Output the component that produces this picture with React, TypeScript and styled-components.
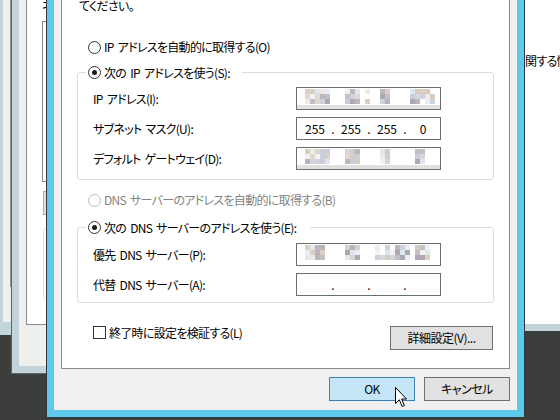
import React from "react";
import styled, { createGlobalStyle } from "styled-components";

const GlobalStyle = createGlobalStyle`
  html, body { margin: 0; padding: 0; }
  body { width: 560px; height: 420px; overflow: hidden; background: #3c3e3b; }
  #root { width: 560px; height: 420px; }
`;

const Desktop = styled.div`
  position: relative;
  width: 560px;
  height: 420px;
  overflow: hidden;
  background: #3c3e3b;
  font-family: "Noto Sans CJK JP", "Noto Sans", sans-serif;
  font-size: 12px;
  line-height: 16px;
  letter-spacing: -0.7px;
  word-spacing: 2px;
  color: #000;
  font-feature-settings: "palt" 1;
`;

/* ---------- background windows ---------- */
const WindowA = styled.div`
  position: absolute;
  left: -197px;
  top: -10px;
  width: 208px;
  height: 345px;
  box-sizing: border-box;
  background: #c4d4db;
  padding-left: 200px;
`;
const WindowAClient = styled.div`
  width: 8px;
  height: 332px;
  background: #eef0ee;
`;
const WindowAPanel = styled.div`
  width: 7px;
  height: 297px;
  border-right: 1px solid #8d9096;
`;

const WindowB = styled.div`
  position: absolute;
  left: 11px;
  top: -10px;
  width: 200px;
  height: 384px;
  box-sizing: border-box;
  border: 1px solid #5d6468;
  border-top: none;
  background: #c3d3da;
  padding: 0 7px 7px;
  display: flex;
  flex-direction: column;
`;
const WindowBClient = styled.div`
  flex: 1;
  background: #eef0ee;
  padding-left: 7px;
`;
const WindowBPanel = styled.div`
  height: 335px;
  box-sizing: border-box;
  background: #fff;
  border-left: 1px solid #898c95;
  border-bottom: 1px solid #898c95;
  padding: 8px 0 0 15px;
  display: flex;
  flex-direction: column;
  align-items: flex-start;
  white-space: nowrap;
`;
const BListBox = styled.div`
  margin-top: 7px;
  width: 150px;
  height: 161px;
  box-sizing: border-box;
  border: 1px solid #828790;
  background: #fff;
`;
const BButton = styled.div`
  margin: 9px 0 0 1px;
  width: 80px;
  height: 24px;
  box-sizing: border-box;
  border: 1px solid #adadad;
  background: #e1e1e1;
`;
const BGroup = styled.div`
  margin: 13px 0 0 1px;
  width: 140px;
  height: 71px;
  box-sizing: border-box;
  border: 1px solid #dcdfe4;
  border-radius: 3px;
`;

const WindowC = styled.div`
  position: absolute;
  left: 300px;
  top: -10px;
  width: 400px;
  height: 341px;
  box-sizing: border-box;
  background: #c3d3da;
  padding-bottom: 7px;
`;
const WindowCClient = styled.div`
  height: 100%;
  box-sizing: border-box;
  background: #fff;
  padding: 63px 0 0 225px;
  white-space: nowrap;
`;

/* ---------- main dialog ---------- */
const Dialog = styled.div`
  position: absolute;
  left: 46px;
  top: -31px;
  width: 479px;
  height: 449px;
  box-sizing: border-box;
  border: 1px solid #33393b;
  background: #5ec9ea;
  padding: 0 7px 7px;
  display: flex;
  flex-direction: column;
`;
const Client = styled.div`
  flex: 1;
  min-height: 0;
  display: flex;
  flex-direction: column;
  background: #f0f0f0;
  padding: 0 7px 9px;
`;
const TabPanel = styled.div`
  flex: 1;
  min-height: 0;
  overflow: hidden;
  background: #fff;
  border: 1px solid #898c95;
  padding-top: 27px;
  display: flex;
  flex-direction: column;
  white-space: nowrap;
`;
const Description = styled.div`
  margin-left: 17px;
  height: 16px;
`;

const RadioRow = styled.label<{ $mt: number; $disabled?: boolean }>`
  display: flex;
  align-items: center;
  gap: 3px;
  height: 16px;
  margin: ${(p) => p.$mt}px 0 0 26px;
  color: ${(p) => (p.$disabled ? "#838383" : "#000")};
`;
const RadioCircle = styled.span<{ $checked?: boolean; $disabled?: boolean }>`
  flex: none;
  width: 13px;
  height: 13px;
  box-sizing: border-box;
  border-radius: 50%;
  border: 1px solid ${(p) => (p.$disabled ? "#bcbcbc" : "#333")};
  background: #fff;
  display: flex;
  align-items: center;
  justify-content: center;
  &::after {
    content: "";
    width: 5px;
    height: 5px;
    border-radius: 50%;
    background: #1a1a1a;
    display: ${(p) => (p.$checked ? "block" : "none")};
  }
`;

const Group = styled.fieldset<{ $mt: number; $pt: number; $pb: number }>`
  margin: ${(p) => p.$mt}px 15px 0;
  padding: ${(p) => p.$pt}px 52px ${(p) => p.$pb}px 15px;
  border: 1px solid #d5dde5;
  border-radius: 3px;
  min-inline-size: 0;
  display: flex;
  flex-direction: column;
  gap: 7px;
`;
const Legend = styled.legend<{ $pr: number }>`
  margin-left: -7px;
  padding: 0 ${(p) => p.$pr}px 0 2px;
  height: 17px;
  line-height: 17px;
  display: flex;
  align-items: center;
  gap: 3px;
`;
const FieldRow = styled.div`
  display: flex;
  align-items: center;
  height: 23px;
`;
const FieldLabel = styled.span`
  flex: 1;
`;
const IpBox = styled.div`
  flex: none;
  width: 145px;
  height: 23px;
  box-sizing: border-box;
  border: 1px solid #6e6e6e;
  background: #fff;
  overflow: hidden;
  display: flex;
`;
const OctetRow = styled.div`
  display: flex;
  align-items: center;
  padding-left: 4px;
  height: 21px;
  letter-spacing: 0;
`;
const Octet = styled.span`
  width: 28px;
  text-align: center;
`;
const Dot = styled.span`
  width: 8px;
  text-align: center;
`;

const OptionsRow = styled.div`
  display: flex;
  justify-content: space-between;
  align-items: flex-start;
  margin: 23px 16px 0 31px;
`;
const CheckLabel = styled.label`
  display: flex;
  align-items: center;
  gap: 3px;
  height: 13px;
`;
const CheckBox = styled.span`
  flex: none;
  width: 13px;
  height: 13px;
  box-sizing: border-box;
  border: 1px solid #333;
  background: #fff;
`;
const PushButton = styled.button<{ $primary?: boolean; $w: number }>`
  flex: none;
  width: ${(p) => p.$w}px;
  height: 24px;
  box-sizing: border-box;
  margin: 0;
  padding: 0;
  border-radius: 0;
  border: 1px solid ${(p) => (p.$primary ? "#3c7fb1" : "#707070")};
  background: ${(p) => (p.$primary ? "#c4e5f6" : "#e1e1e1")};
  font-family: inherit;
  font-size: 12px;
  line-height: 16px;
  letter-spacing: -0.5px;
  font-feature-settings: "palt" 1;
  color: #000;
`;
const ButtonRow = styled.div`
  display: flex;
  justify-content: flex-end;
  gap: 9px;
  margin-top: 8px;
`;

const Cursor = styled.svg`
  position: absolute;
  left: 395px;
  top: 387px;
`;

/* ---------- blurred address mosaic ---------- */
const palette = [
  "#d9cfc3", "#c9ced8", "#e8eef7", "#bdb6bd", "#f2ebe3", "#d3d6db",
  "#c4c0c8", "#e1d9cf", "#dfe6ef", "#aea8b1", "#f6f1ec", "#cdd3dc",
  "#ffffff", "#eef2f7", "#b9b5ba", "#d7cbbd",
];

function seeded(seed: number) {
  let s = seed;
  return () => {
    s = (s * 16807) % 2147483647;
    return (s - 1) / 2147483646;
  };
}

function Mosaic({ groups, strip, seed }: { groups: [number, number][]; strip?: boolean; seed: number }) {
  const r = seeded(seed);
  const cells: React.ReactNode[] = [];
  groups.forEach(([a, b], gi) => {
    for (let x = a; x < b; x += 5) {
      for (let row = 0; row < 3; row++) {
        const c = palette[Math.floor(r() * palette.length)];
        cells.push(<rect key={`${gi}-${x}-${row}`} x={x} y={1 + row * 5} width={5} height={5} fill={c} />);
      }
    }
  });
  return (
    <svg width={143} height={21} viewBox="0 0 143 21">
      {cells}
      {strip && <rect x={0} y={17} width={143} height={4} fill="#e1e1e1" />}
    </svg>
  );
}

function IpOctets({ values }: { values: string[] }) {
  return (
    <OctetRow>
      <Octet>{values[0]}</Octet>
      <Dot>.</Dot>
      <Octet>{values[1]}</Octet>
      <Dot>.</Dot>
      <Octet>{values[2]}</Octet>
      <Dot>.</Dot>
      <Octet>{values[3]}</Octet>
    </OctetRow>
  );
}

export default function App() {
  return (
    <>
      <GlobalStyle />
      <Desktop>
        <WindowA>
          <WindowAClient>
            <WindowAPanel />
          </WindowAClient>
        </WindowA>

        <WindowB>
          <WindowBClient>
            <WindowBPanel>
              <div>ネ</div>
              <BListBox />
              <BButton />
              <BGroup />
            </WindowBPanel>
          </WindowBClient>
        </WindowB>

        <WindowC>
          <WindowCClient>関する情報</WindowCClient>
        </WindowC>

        <Dialog>
          <Client>
            <TabPanel>
              <Description>てください。</Description>

              <RadioRow $mt={25}>
                <RadioCircle />
                IP アドレスを自動的に取得する(O)
              </RadioRow>

              <Group $mt={9} $pt={6} $pb={9}>
                <Legend $pr={12}>
                  <RadioCircle $checked />
                  次の IP アドレスを使う(S):
                </Legend>
                <FieldRow>
                  <FieldLabel>IP アドレス(I):</FieldLabel>
                  <IpBox>
                    <Mosaic seed={11} strip groups={[[8, 33], [48, 63], [68, 73], [83, 93], [113, 138]]} />
                  </IpBox>
                </FieldRow>
                <FieldRow>
                  <FieldLabel>サブネット マスク(U):</FieldLabel>
                  <IpBox>
                    <IpOctets values={["255", "255", "255", "0"]} />
                  </IpBox>
                </FieldRow>
                <FieldRow>
                  <FieldLabel>デフォルト ゲートウェイ(D):</FieldLabel>
                  <IpBox>
                    <Mosaic seed={29} strip groups={[[8, 33], [48, 63], [83, 93], [118, 128]]} />
                  </IpBox>
                </FieldRow>
              </Group>

              <RadioRow $mt={12} $disabled>
                <RadioCircle $disabled />
                DNS サーバーのアドレスを自動的に取得する(B)
              </RadioRow>

              <Group $mt={11} $pt={7} $pb={6}>
                <Legend $pr={14}>
                  <RadioCircle $checked />
                  次の DNS サーバーのアドレスを使う(E):
                </Legend>
                <FieldRow>
                  <FieldLabel>優先 DNS サーバー(P):</FieldLabel>
                  <IpBox>
                    <Mosaic seed={47} groups={[[8, 28], [48, 63], [78, 103], [103, 113], [118, 133]]} />
                  </IpBox>
                </FieldRow>
                <FieldRow>
                  <FieldLabel>代替 DNS サーバー(A):</FieldLabel>
                  <IpBox>
                    <IpOctets values={["", "", "", ""]} />
                  </IpBox>
                </FieldRow>
              </Group>

              <OptionsRow>
                <CheckLabel>
                  <CheckBox />
                  終了時に設定を検証する(L)
                </CheckLabel>
                <PushButton $w={103}>詳細設定(V)...</PushButton>
              </OptionsRow>
            </TabPanel>

            <ButtonRow>
              <PushButton $primary $w={86}>OK</PushButton>
              <PushButton $w={86}>キャンセル</PushButton>
            </ButtonRow>
          </Client>
        </Dialog>

        <Cursor width="13" height="21" viewBox="0 0 13 21">
          <path d="M0.5 0.5 V16.5 L4.3 12.8 L7.2 19.5 L9.4 18.5 L6.6 12 H11.5 Z" fill="#fff" stroke="#000" strokeWidth="1" strokeLinejoin="miter" />
        </Cursor>
      </Desktop>
    </>
  );
}
